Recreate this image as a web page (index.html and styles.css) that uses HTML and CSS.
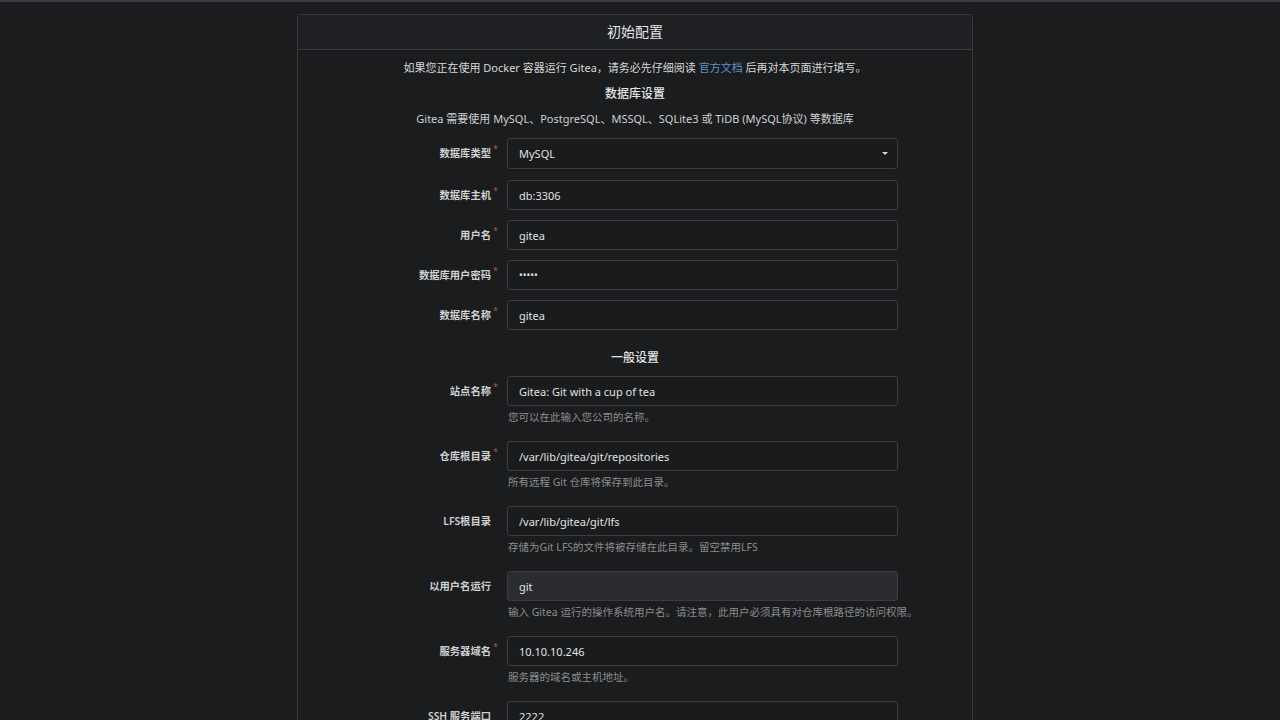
FILE: index.html
```html
<!DOCTYPE html>
<html lang="zh-CN">
<head>
<meta charset="utf-8">
<title>安装页面 - Gitea</title>
<link rel="stylesheet" href="styles.css">
</head>
<body>
<div class="topbar"></div>
<div class="page">
  <div class="card">
    <div class="card-header">初始配置</div>
    <div class="card-body">
      <p class="notice">如果您正在使用 Docker 容器运行 Gitea，请务必先仔细阅读 <a href="#">官方文档</a> 后再对本页面进行填写。</p>
      <h4 class="section-title">数据库设置</h4>
      <p class="section-desc">Gitea 需要使用 MySQL、PostgreSQL、MSSQL、SQLite3 或 TiDB (MySQL协议) 等数据库</p>

      <div class="field select-field">
        <label class="lbl required">数据库类型</label>
        <div class="control">
          <div class="select"><span>MySQL</span><span class="caret"></span></div>
        </div>
      </div>
      <div class="field">
        <label class="lbl required">数据库主机</label>
        <div class="control"><input class="input" type="text" value="db:3306"></div>
      </div>
      <div class="field">
        <label class="lbl required">用户名</label>
        <div class="control"><input class="input" type="text" value="gitea"></div>
      </div>
      <div class="field">
        <label class="lbl required">数据库用户密码</label>
        <div class="control"><input class="input pw" type="password" value="gitea"></div>
      </div>
      <div class="field">
        <label class="lbl required">数据库名称</label>
        <div class="control"><input class="input" type="text" value="gitea"></div>
      </div>

      <h4 class="section-title general">一般设置</h4>

      <div class="field help-field">
        <label class="lbl required">站点名称</label>
        <div class="control">
          <input class="input" type="text" value="Gitea: Git with a cup of tea">
          <span class="help">您可以在此输入您公司的名称。</span>
        </div>
      </div>
      <div class="field help-field">
        <label class="lbl required">仓库根目录</label>
        <div class="control">
          <input class="input" type="text" value="/var/lib/gitea/git/repositories">
          <span class="help">所有远程 Git 仓库将保存到此目录。</span>
        </div>
      </div>
      <div class="field help-field">
        <label class="lbl">LFS根目录</label>
        <div class="control">
          <input class="input" type="text" value="/var/lib/gitea/git/lfs">
          <span class="help">存储为Git LFS的文件将被存储在此目录。留空禁用LFS</span>
        </div>
      </div>
      <div class="field help-field">
        <label class="lbl">以用户名运行</label>
        <div class="control">
          <input class="input disabled" type="text" value="git" readonly>
          <span class="help wide">输入 Gitea 运行的操作系统用户名。请注意，此用户必须具有对仓库根路径的访问权限。</span>
        </div>
      </div>
      <div class="field help-field">
        <label class="lbl required">服务器域名</label>
        <div class="control">
          <input class="input" type="text" value="10.10.10.246">
          <span class="help">服务器的域名或主机地址。</span>
        </div>
      </div>
      <div class="field help-field">
        <label class="lbl">SSH 服务端口</label>
        <div class="control">
          <input class="input" type="text" value="2222">
          <span class="help">SSH 服务器的端口号，为空则禁用它。</span>
        </div>
      </div>
    </div>
  </div>
</div>
</body>
</html>
```

FILE: styles.css
```css
* { box-sizing: border-box; }

html, body {
  margin: 0;
  padding: 0;
  background: #1b1c1e;
  color: #d6d7d9;
  font-family: "Noto Sans", "Noto Sans CJK SC", sans-serif;
  font-size: 11px;
  overflow: hidden;
  height: 720px;
}

.topbar {
  height: 2px;
  background: #3a3b3e;
}

.page {
  padding: 12px 10px 0 0;
  display: flex;
  justify-content: center;
}

.card {
  width: 676px;
  border: 1px solid #36383b;
  border-radius: 3px;
  background: #1b1c1e;
}

.card-header {
  height: 35px;
  display: flex;
  align-items: center;
  justify-content: center;
  padding-bottom: 3px;
  font-size: 14px;
  color: #e2e3e5;
  background: #1f2023;
  border-bottom: 1px solid #3a3c3f;
}

.card-body {
  padding: 10px 0 20px;
}

.notice {
  margin: 0;
  text-align: center;
  line-height: 16px;
  color: #d6d7d9;
}

.notice a {
  color: #5a92cc;
  text-decoration: none;
}

.section-title {
  margin: 9px 0 0;
  text-align: center;
  font-size: 12px;
  font-weight: 500;
  line-height: 17px;
  color: #e2e3e5;
}

.section-desc {
  margin: 9px 0 11px;
  text-align: center;
  line-height: 16px;
  color: #cfd0d2;
}

.section-title.general {
  margin: 19px 0 10px;
}

.field {
  display: grid;
  grid-template-columns: 200px 391px;
  column-gap: 9px;
  align-items: start;
  margin-bottom: 10px;
}

.select-field {
  margin-bottom: 11px;
}

.help-field {
  margin-bottom: 16px;
}

.lbl {
  text-align: right;
  font-size: 10.3px;
  font-weight: 600;
  color: #cfd0d2;
  line-height: 30px;
  white-space: nowrap;
  padding-right: 7px;
  position: relative;
}

.lbl.required::after {
  content: "*";
  color: #b84c4c;
  position: absolute;
  right: 0;
  top: -4px;
  font-size: 9px;
  font-weight: 400;
}

.control {
  display: flex;
  flex-direction: column;
}

.input, .select {
  width: 391px;
  height: 30px;
  border: 1px solid #3a3c40;
  border-radius: 3px;
  background: #1a1b1d;
  color: #e0e1e3;
  font-family: "Noto Sans", "Noto Sans CJK SC", sans-serif;
  font-size: 11px;
  padding: 0 11px;
  outline: none;
}

.input.pw {
  font-size: 10px;
}

.input.disabled {
  background: #2b2c2f;
}

.select {
  height: 31px;
  display: flex;
  align-items: center;
  justify-content: space-between;
  padding-right: 9px;
}

.caret {
  width: 0;
  height: 0;
  border-left: 3px solid transparent;
  border-right: 3px solid transparent;
  border-top: 3px solid #d6d7d9;
}

.help {
  margin-top: 3px;
  padding-left: 1px;
  font-size: 10.5px;
  line-height: 16px;
  color: #8b8d90;
  white-space: nowrap;
}
```
